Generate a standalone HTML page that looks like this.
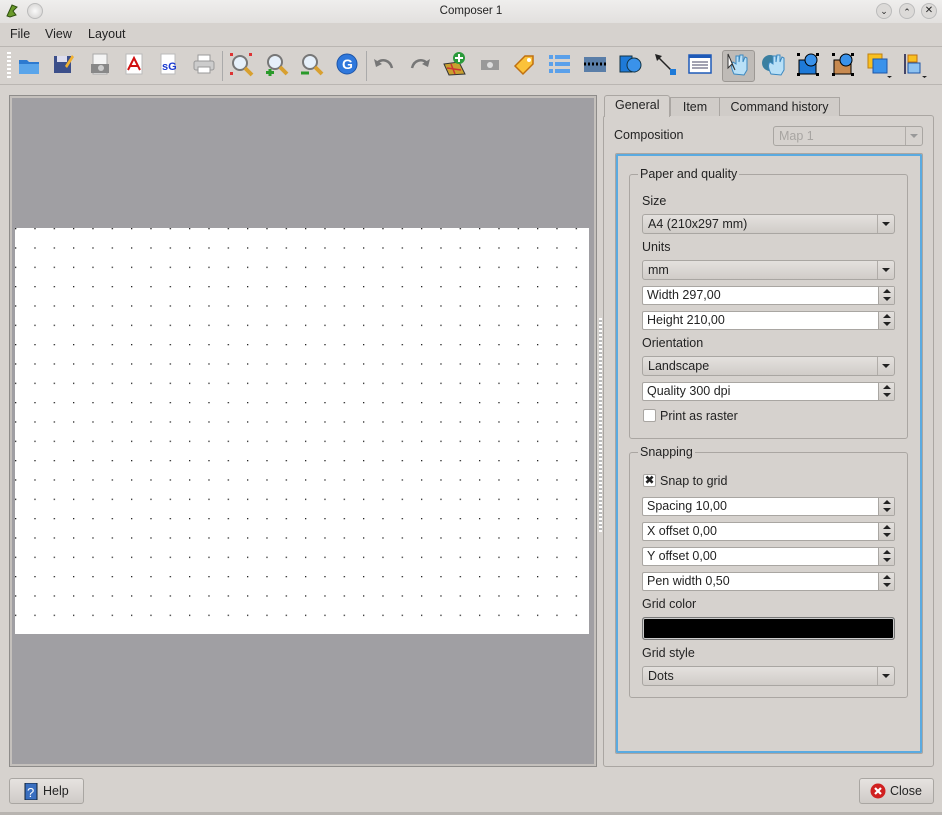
<!DOCTYPE html>
<html><head><meta charset="utf-8"><style>
*{box-sizing:border-box;margin:0;padding:0}
body{width:942px;height:815px;background:#d6d2ce;font-family:"Liberation Sans","DejaVu Sans",sans-serif;font-size:12.5px;color:#232323;position:relative;overflow:hidden}
.a{position:absolute}
.title{left:0;top:0;width:942px;height:23px;background:linear-gradient(#efeeed,#e2e0de);font-size:11.5px;text-align:center;line-height:23px}
.menu span{position:absolute;top:27px}
.tb svg{position:absolute;top:52px}
.lbl{position:absolute}
.combo{position:absolute;height:20px;border:1px solid #a9a6a2;border-radius:3px;background:linear-gradient(#e4e1de,#d0ccc8);padding-left:5px;line-height:18px}
.combo:after{content:"";position:absolute;right:0;top:0;width:16px;height:18px;border-left:1px solid #b0aca8}
.combo i{position:absolute;right:4px;top:7px;border-left:4px solid transparent;border-right:4px solid transparent;border-top:4px solid #222;z-index:1}
.spin{position:absolute;height:19px;border:1px solid #a9a6a2;border-radius:2px;background:#fff;padding-left:4px;line-height:17px}
.spin b{position:absolute;right:0;top:0;width:16px;height:17px;background:linear-gradient(#e4e1de,#d0ccc8);border-left:1px solid #a9a6a2}
.spin b:before{content:"";position:absolute;left:4px;top:2px;border-left:4px solid transparent;border-right:4px solid transparent;border-bottom:4px solid #222}
.spin b:after{content:"";position:absolute;left:4px;top:10px;border-left:4px solid transparent;border-right:4px solid transparent;border-top:4px solid #222}
.grp{position:absolute;border:1px solid #aaa6a2;border-radius:3px}
.grp span{position:absolute;top:-8px;left:8px;background:#d6d2ce;padding:0 2px}
.btn{position:absolute;height:26px;border:1px solid #a9a6a2;border-radius:3px;background:linear-gradient(#e6e3e0,#cfcbc7)}
</style></head><body>
<div class="a title">Composer 1</div>
<svg class="a" style="left:4px;top:3px" width="16" height="16"><path d="M3 13 L8 2 L13 4 L9 8 L12 12 L6 14Z" fill="#6a9a2a" stroke="#2f4f10"/></svg>
<div class="a" style="left:27px;top:3px;width:16px;height:16px;border-radius:50%;background:radial-gradient(#fafafa,#cfcdcb);border:1px solid #bbb"></div>
<div class="a" style="left:876px;top:3px;width:16px;height:16px;border-radius:50%;background:#dcdad8;border:1px solid #bbb;font-size:9px;text-align:center;line-height:14px">⌄</div>
<div class="a" style="left:899px;top:3px;width:16px;height:16px;border-radius:50%;background:#dcdad8;border:1px solid #bbb;font-size:9px;text-align:center;line-height:16px">⌃</div>
<div class="a" style="left:921px;top:3px;width:16px;height:16px;border-radius:50%;background:#dcdad8;border:1px solid #bbb;font-size:10px;text-align:center;line-height:14px">✕</div>
<div class="menu"><span style="left:10px">File</span><span style="left:45px">View</span><span style="left:88px">Layout</span></div>
<div class="a" style="left:0;top:46px;width:942px;height:1px;background:#bab6b2"></div>
<div class="a" style="left:0;top:84px;width:942px;height:1px;background:#bab6b2"></div>
<div class="a" style="left:7px;top:52px;width:4px;height:28px;background:repeating-linear-gradient(#fff 0 2px,transparent 2px 4px)"></div>
<div class="a" style="left:222px;top:51px;width:1px;height:30px;background:#aaa"></div>
<div class="a" style="left:366px;top:51px;width:1px;height:30px;background:#aaa"></div>
<div class="a" style="left:722px;top:50px;width:33px;height:32px;border:1px solid #9c9894;border-radius:3px;background:#bfbbb7"></div>
<div class="tb">
<svg style="left:17px" width="24" height="24"><path d="M2 8h8l2 2h10v12H2z" fill="#2d7ad0"/><path d="M2 12h20v10H2z" fill="#5aa5ea"/></svg>
<svg style="left:51px" width="24" height="24"><rect x="3" y="4" width="17" height="17" fill="#3c4f8a"/><rect x="6" y="4" width="10" height="6" fill="#dde"/><path d="M14 14 L21 3 L23 5 L16 16z" fill="#f0b030"/></svg>
<svg style="left:88px" width="24" height="24"><rect x="5" y="2" width="14" height="20" fill="#f4f4f4" stroke="#aaa"/><rect x="3" y="12" width="18" height="9" fill="#888"/><circle cx="13" cy="16" r="3" fill="#ccc"/></svg>
<svg style="left:122px" width="24" height="24"><rect x="4" y="2" width="16" height="20" fill="#fff" stroke="#bbb"/><path d="M6 18 L12 6 L18 18 M8 14 H16" stroke="#d01010" stroke-width="2" fill="none"/></svg>
<svg style="left:156px" width="24" height="24"><rect x="5" y="2" width="14" height="20" fill="#fff" stroke="#bbb"/><text x="6" y="18" font-size="11" font-weight="bold" fill="#1a3ad0" font-family="Liberation Sans">sG</text></svg>
<svg style="left:192px" width="24" height="24"><rect x="6" y="3" width="12" height="6" fill="#fff" stroke="#999"/><rect x="2" y="9" width="20" height="9" rx="2" fill="#ccc" stroke="#999"/><rect x="6" y="15" width="12" height="6" fill="#fff" stroke="#999"/></svg>
<svg style="left:229px" width="26" height="26"><circle cx="11" cy="11" r="7" fill="#e6f0fa" stroke="#777" stroke-width="2"/><path d="M16 16l7 7" stroke="#d8a030" stroke-width="4"/><rect x="1" y="1" width="3" height="3" fill="#d33"/><rect x="20" y="1" width="3" height="3" fill="#d33"/><rect x="1" y="20" width="3" height="3" fill="#d33"/></svg>
<svg style="left:264px" width="26" height="26"><circle cx="11" cy="10" r="7" fill="#e6f0fa" stroke="#777" stroke-width="2"/><path d="M16 15l7 7" stroke="#d8a030" stroke-width="4"/><path d="M6 17v7M2 20.5h8" stroke="#2a9a2a" stroke-width="3"/></svg>
<svg style="left:299px" width="26" height="26"><circle cx="11" cy="10" r="7" fill="#e6f0fa" stroke="#777" stroke-width="2"/><path d="M16 15l7 7" stroke="#d8a030" stroke-width="4"/><path d="M2 21h8" stroke="#2a9a2a" stroke-width="3"/></svg>
<svg style="left:335px" width="24" height="24"><circle cx="12" cy="12" r="10" fill="#2f78dc" stroke="#1d55a8"/><text x="7" y="17" font-size="14" font-weight="bold" fill="#fff" font-family="Liberation Sans">G</text></svg>
<svg style="left:372px" width="24" height="24"><path d="M20 16 C18 8 10 6 5 11" stroke="#777" stroke-width="2.5" fill="none"/><path d="M2 7 L4 15 L10 12z" fill="#777"/></svg>
<svg style="left:408px" width="24" height="24"><path d="M4 16 C6 8 14 6 19 11" stroke="#777" stroke-width="2.5" fill="none"/><path d="M22 7 L20 15 L14 12z" fill="#777"/></svg>
<svg style="left:443px" width="24" height="24"><path d="M1 12 L16 10 L22 22 L6 23z" fill="#c9a030" stroke="#333"/><path d="M4 16 L18 18 M8 12 L12 22" stroke="#c33" stroke-width="1.5"/><circle cx="16" cy="6" r="6" fill="#2a9a3a"/><path d="M16 2v8M12 6h8" stroke="#fff" stroke-width="2"/></svg>
<svg style="left:478px" width="24" height="24"><rect x="3" y="8" width="18" height="10" fill="#999"/><circle cx="12" cy="13" r="3" fill="#ddd"/></svg>
<svg style="left:513px" width="24" height="24"><path d="M2 14 L12 4 L20 4 L20 12 L10 22z" fill="#fbc23a" stroke="#c07010" stroke-width="1.5"/><circle cx="16" cy="8" r="2" fill="#fff"/></svg>
<svg style="left:548px" width="24" height="24"><g fill="#5aa0ea"><rect x="1" y="3" width="4" height="4"/><rect x="7" y="3" width="15" height="4"/><rect x="1" y="10" width="4" height="4"/><rect x="7" y="10" width="15" height="4"/><rect x="1" y="17" width="4" height="4"/><rect x="7" y="17" width="15" height="4"/></g></svg>
<svg style="left:583px" width="24" height="24"><rect x="1" y="5" width="22" height="15" fill="#5a7ea8"/><path d="M1 12h22" stroke="#000" stroke-width="3" stroke-dasharray="2 2"/></svg>
<svg style="left:618px" width="24" height="24"><path d="M2 4h12v16H2z" fill="#1e7ad8" stroke="#134"/><circle cx="16" cy="13" r="7" fill="#3a92ea" stroke="#134"/></svg>
<svg style="left:653px" width="24" height="24"><path d="M3 3 L20 20" stroke="#222" stroke-width="1.5"/><path d="M2 2 L9 4 L4 9z" fill="#222"/><rect x="17" y="17" width="6" height="6" fill="#1e7ad8"/></svg>
<svg style="left:688px" width="24" height="24"><rect x="1" y="3" width="22" height="18" fill="#fff" stroke="#1e5ab8" stroke-width="1.5"/><rect x="1" y="3" width="22" height="3" fill="#1e5ab8"/><path d="M4 10h16M4 13h16M4 16h16" stroke="#446"/></svg>
<svg style="left:726px" width="26" height="26"><path d="M8 22 C5 16 5 12 7 10 L10 12 L10 4 L13 4 L13 10 L14 3 L17 3 L17 10 L19 5 L21 6 L21 18 L18 23z" fill="#b9e0f7" stroke="#3b88c0"/><path d="M2 2 L2 16 L6 12 L9 18z" fill="#fff" stroke="#333"/></svg>
<svg style="left:761px" width="26" height="26"><circle cx="9" cy="11" r="8" fill="#3a7fa0"/><path d="M10 22 C7 16 7 12 9 10 L12 12 L12 4 L15 4 L15 10 L16 3 L19 3 L19 10 L21 5 L23 6 L23 18 L20 23z" fill="#b9e0f7" stroke="#3b88c0"/></svg>
<svg style="left:796px" width="26" height="26"><rect x="3" y="8" width="17" height="14" fill="#1e7ad8" stroke="#000"/><circle cx="15" cy="8" r="6" fill="#3a92ea" stroke="#000"/><g fill="#000"><rect x="1" y="21" width="3" height="3"/><rect x="20" y="21" width="3" height="3"/><rect x="1" y="1" width="3" height="3"/><rect x="20" y="1" width="3" height="3"/></g></svg>
<svg style="left:831px" width="26" height="26"><rect x="3" y="8" width="17" height="14" fill="#c88a50" stroke="#000"/><circle cx="15" cy="8" r="6" fill="#3a92ea" stroke="#000"/><g fill="#000"><rect x="1" y="21" width="3" height="3"/><rect x="20" y="21" width="3" height="3"/><rect x="1" y="1" width="3" height="3"/><rect x="20" y="1" width="3" height="3"/></g></svg>
<svg style="left:867px" width="26" height="26"><rect x="1" y="2" width="14" height="14" fill="#f8c020" stroke="#c08010"/><rect x="6" y="7" width="14" height="14" fill="#3a92ea" stroke="#1d55a8"/><path d="M20 24h5l-2.5 2z" fill="#222"/></svg>
<svg style="left:902px" width="26" height="26"><path d="M3 2v20" stroke="#446" stroke-width="2"/><rect x="6" y="3" width="9" height="7" fill="#f8c020" stroke="#c07010"/><rect x="6" y="11" width="12" height="10" fill="#8ec2f0" stroke="#1d55a8"/><path d="M20 24h5l-2.5 2z" fill="#222"/></svg>
</div>
<!-- canvas -->
<div class="a" style="left:9px;top:95px;width:588px;height:672px;border:1px solid #8e8c8a;background:#a09fa3;box-shadow:inset 0 0 0 2px #c4c0bc"></div>
<svg class="a" style="left:15px;top:228px" width="574" height="406"><defs><pattern id="d" width="19.333" height="19.333" patternUnits="userSpaceOnUse"><rect x="0" y="0" width="1.3" height="1.3" fill="#222"/></pattern></defs><rect width="574" height="406" fill="#fff"/><rect width="574" height="406" fill="url(#d)"/></svg>
<div class="a" style="left:599px;top:318px;width:3px;height:214px;background:repeating-linear-gradient(#fff 0 2px,#bbb 2px 4px)"></div>
<!-- right panel -->
<div class="a" style="left:603px;top:115px;width:331px;height:652px;border:1px solid #aaa6a2;border-radius:3px"></div>
<div class="a" style="left:670px;top:97px;width:50px;height:19px;border:1px solid #aaa6a2;border-bottom:none;background:#d0ccc8;text-align:center;line-height:18px">Item</div>
<div class="a" style="left:719px;top:97px;width:121px;height:19px;border:1px solid #aaa6a2;border-bottom:none;background:#d0ccc8;text-align:center;line-height:18px">Command history</div>
<div class="a" style="left:604px;top:95px;width:66px;height:22px;border:1px solid #aaa6a2;border-bottom:none;background:#d6d2ce;border-radius:3px 3px 0 0;padding-left:10px;line-height:19px">General</div>
<div class="lbl" style="left:614px;top:128px">Composition</div>
<div class="combo" style="left:773px;top:126px;width:150px;color:#a8a5a2;background:#d6d2ce">Map 1<i style="border-top-color:#999"></i></div>
<div class="a" style="left:615px;top:153px;width:308px;height:601px;border:1px solid #aaa6a2;box-shadow:inset 0 0 0 2px #5aaae0;border-radius:2px"></div>
<div class="grp" style="left:629px;top:174px;width:279px;height:265px"><span>Paper and quality</span></div>
<div class="lbl" style="left:642px;top:194px">Size</div>
<div class="combo" style="left:642px;top:214px;width:253px">A4 (210x297 mm)<i></i></div>
<div class="lbl" style="left:642px;top:240px">Units</div>
<div class="combo" style="left:642px;top:260px;width:253px">mm<i></i></div>
<div class="spin" style="left:642px;top:286px;width:253px">Width 297,00<b></b></div>
<div class="spin" style="left:642px;top:311px;width:253px">Height 210,00<b></b></div>
<div class="lbl" style="left:642px;top:336px">Orientation</div>
<div class="combo" style="left:642px;top:356px;width:253px">Landscape<i></i></div>
<div class="spin" style="left:642px;top:382px;width:253px">Quality 300 dpi<b></b></div>
<div class="a" style="left:643px;top:409px;width:13px;height:13px;border:1px solid #a9a6a2;background:#fff;border-radius:2px"></div>
<div class="lbl" style="left:660px;top:409px">Print as raster</div>
<div class="grp" style="left:629px;top:452px;width:279px;height:246px"><span>Snapping</span></div>
<div class="a" style="left:643px;top:474px;width:13px;height:13px;border:1px solid #a9a6a2;background:#fff;border-radius:2px;font-size:12px;line-height:11px;text-align:center;font-weight:bold">✖</div>
<div class="lbl" style="left:660px;top:474px">Snap to grid</div>
<div class="spin" style="left:642px;top:497px;width:253px">Spacing 10,00<b></b></div>
<div class="spin" style="left:642px;top:522px;width:253px">X offset 0,00<b></b></div>
<div class="spin" style="left:642px;top:547px;width:253px">Y offset 0,00<b></b></div>
<div class="spin" style="left:642px;top:572px;width:253px">Pen width 0,50<b></b></div>
<div class="lbl" style="left:642px;top:597px">Grid color</div>
<div class="a" style="left:642px;top:617px;width:253px;height:23px;border:1px solid #777;border-radius:3px;background:#000;box-shadow:inset 0 0 0 1px #ccc"></div>
<div class="lbl" style="left:642px;top:646px">Grid style</div>
<div class="combo" style="left:642px;top:666px;width:253px">Dots<i></i></div>
<!-- bottom -->
<div class="btn" style="left:9px;top:778px;width:75px"><svg class="a" style="left:14px;top:4px" width="14" height="17"><rect x="1" y="0" width="12" height="17" fill="#3a6fc0" stroke="#123"/><text x="3" y="14" font-size="13" fill="#fff" font-family="Liberation Sans">?</text></svg><span class="a" style="left:33px;top:5px">Help</span></div>
<div class="btn" style="left:859px;top:778px;width:75px"><svg class="a" style="left:10px;top:4px" width="16" height="16"><circle cx="8" cy="8" r="7.5" fill="#d02020"/><path d="M5 5l6 6M11 5l-6 6" stroke="#fff" stroke-width="2.2"/></svg><span class="a" style="left:30px;top:5px">Close</span></div>
<div class="a" style="left:0;top:812px;width:942px;height:3px;background:#b8b4b0"></div>
</body></html>
